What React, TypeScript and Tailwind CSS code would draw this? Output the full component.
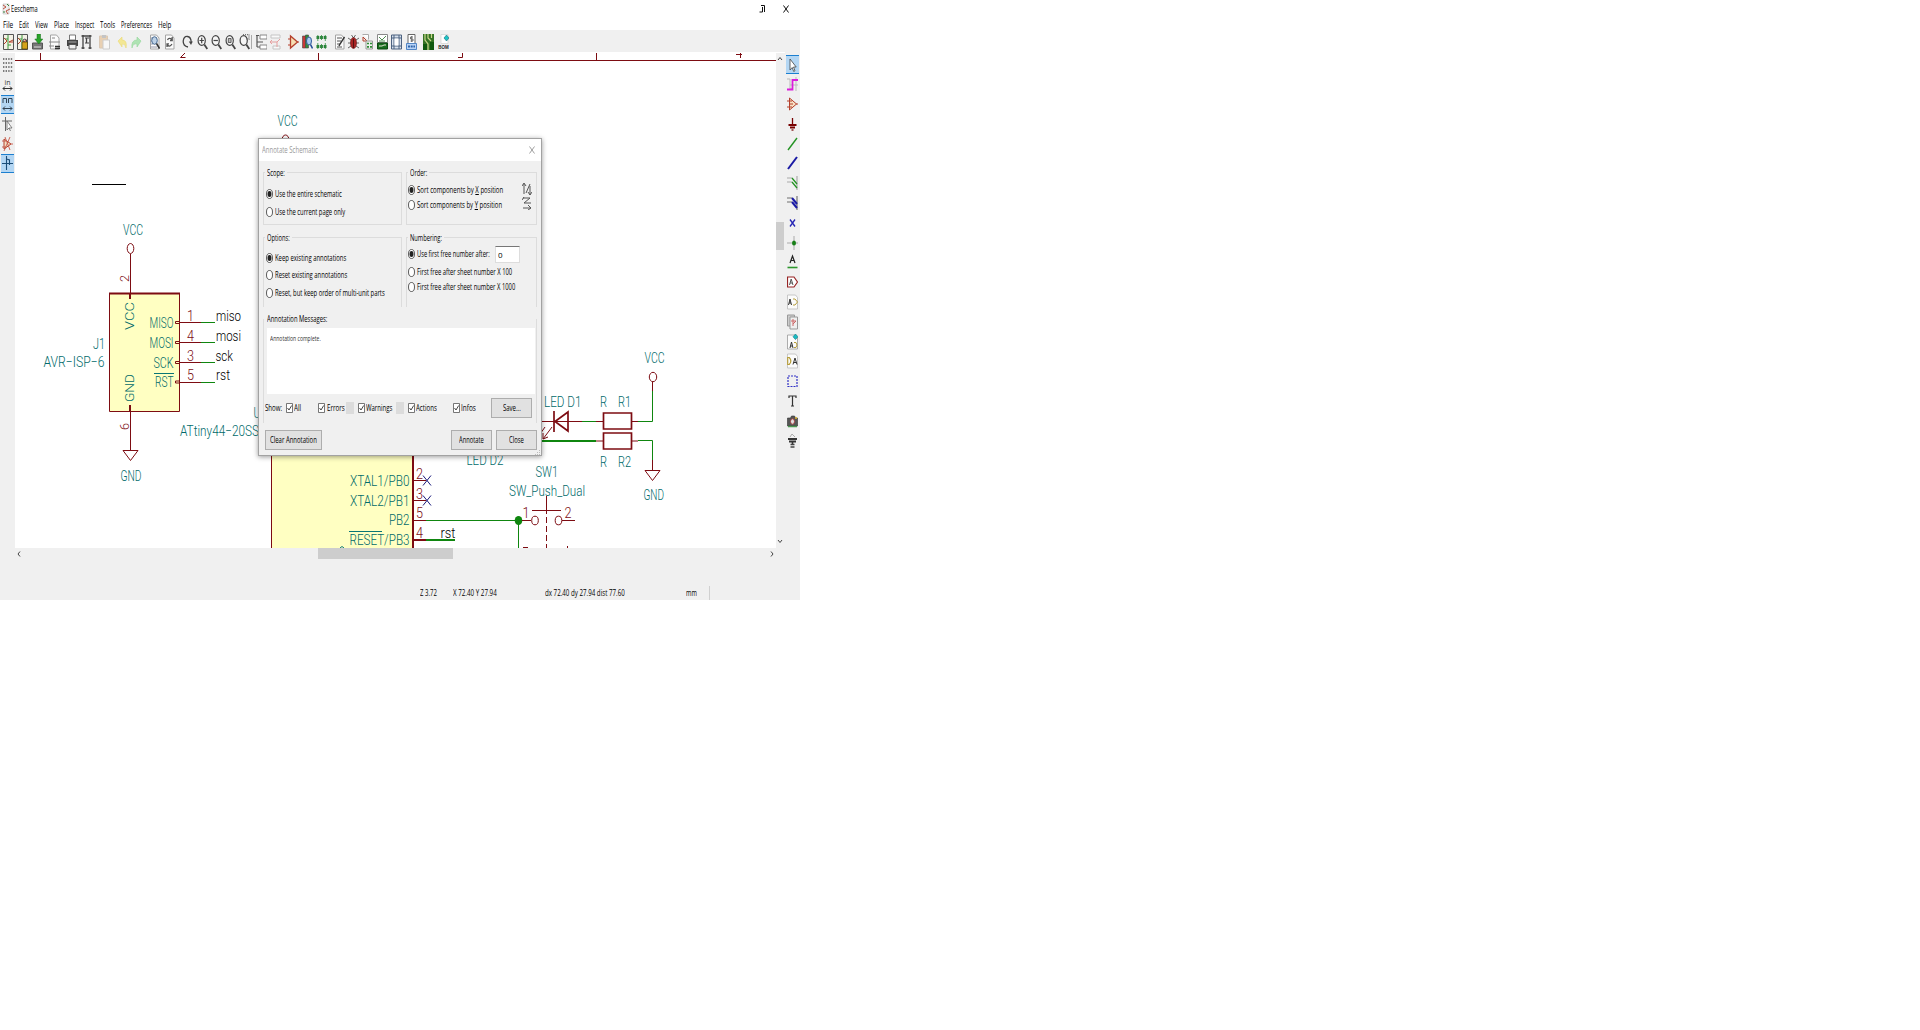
import React, { useLayoutEffect, useRef, useState } from "react";

/** A single line of UI text squeezed or stretched to a given width. */
function Fit({ w, children, className = "" }: { w: number; children: React.ReactNode; className?: string }) {
  const ref = useRef<HTMLSpanElement>(null);
  const [k, setK] = useState(1);
  useLayoutEffect(() => {
    if (ref.current) setK(w / ref.current.offsetWidth);
  }, [w]);
  return (
    <span className={`inline-block shrink-0 whitespace-nowrap ${className}`} style={{ width: w }}>
      <span ref={ref} className="inline-block origin-left" style={{ transform: `scaleX(${k})` }}>
        {children}
      </span>
    </span>
  );
}

function Icon({ children, className = "" }: { children: React.ReactNode; className?: string }) {
  return (
    <svg viewBox="0 0 11 16" className={`h-4 w-[11px] shrink-0 ${className}`} fill="none" strokeWidth="1">
      {children}
    </svg>
  );
}

const G = "#444";
const R = "#b5402c";
const page = <path d="M1.5 1h6l2.500 3v11h-8.500z" fill="#fbfbfb" stroke="#a5a5a5" />;
const lens = (
  <>
    <ellipse cx="4.700" cy="6.500" rx="3.600" ry="4.800" stroke={G} strokeWidth="1.200" fill="#f6f6f6" />
    <path d="M7.300 10.500l3 4.500" stroke={G} strokeWidth="1.800" />
  </>
);
const sheet = (
  <>
    <path d="M.5.5h10v15H.5z" fill="#f4f1e6" stroke="#555" />
    <path d="M5 1v14M5 5H2M5 11h3" stroke="#3c9a3c" />
    <path d="M1 4l3 3-3 3M6 8l4-2M6 8h4" stroke={R} />
  </>
);

const topTools: [string, React.ReactNode][] = [
  ["ml-[2.500px]", sheet],
  ["ml-[3.500px]", <>{sheet}<path d="M5 8h5.500v7H5z" fill="#d3a21a" stroke="#4b3c08" strokeWidth=".7" /><path d="M6 8V6q2-2 3.500 0v2" stroke="#444" /></>],
  ["ml-[3.500px]", <><path d="M.5 9h10v6H.5z" fill="#777" stroke="#555" /><path d="M2 13h7" stroke="#ddd" /><path d="M5 0h3.500v5h2.300L6.800 10 2.800 5H5z" fill="#29a329" stroke="#17701b" strokeWidth=".5" /></>],
  ["ml-[6.500px]", <>{page}<path d="M3 4h3M0 8h11M0 12h5" stroke="#888" /><path d="M6 12.500h5M6 14.500h5" stroke="#333" strokeWidth="1.300" /></>],
  ["ml-[6.500px]", <><path d="M2.500 1h6v5h-6z" fill="#fff" stroke="#777" /><path d="M0 6h11v6H0z" fill="#444" /><path d="M2 10.500h7V15H2z" fill="#eee" stroke="#555" /><path d="M1.500 8h8" stroke="#aaa" /></>],
  ["ml-[3.500px]", <><path d="M.5 2h10M2 1v14M9 1v14M.5 14h3M7.500 14h3M5.500 4v5" stroke={G} strokeWidth="1.300" /><path d="M4 4h4M4 9h4" stroke={G} /></>],
  ["ml-[7px]", <g opacity=".5"><path d="M.5 2h8v12h-8z" fill="#e4b275" stroke="#c5a179" /><path d="M3 1h4v3H3z" fill="#999" /><path d="M4 6h6.500v9H4z" fill="#fff" stroke="#aaa" /></g>],
  ["ml-[6px]", <path d="M2 7l4-4v3q5.500 0 4 8-1-5-4-4v3z" fill="#f3e794" stroke="#ebda74" strokeWidth=".6" />],
  ["ml-[4px]", <path d="M10 7L6 3v3q-6 0-5 8 1-5 5-4v3z" fill="#afe3b4" stroke="#94d79b" strokeWidth=".6" />],
  ["ml-[7px]", <>{page}<path d="M2 4h6M2 7h2M2 10h2M2 13h6" stroke="#99a" /><ellipse cx="5.500" cy="6.500" rx="2.800" ry="3.800" stroke="#456891" fill="#bcd0e5" /><path d="M7.500 9.500l3 5" stroke="#333" strokeWidth="1.600" /></>],
  ["ml-[4px]", <>{page}<path d="M8 5.500Q5 3 3.500 6M3 10.500q2.500 3.500 5-.5M8.200 3v3.500H6M3 13V9.800h2" stroke="#555" strokeWidth="1.300" /></>],
  ["ml-[7px]", <><path d="M6 13Q1 12 1.200 7 2 2 5.500 2.500 9 3 9.200 8" stroke={G} strokeWidth="1.300" /><path d="M6.800 7.500h4L9 11z" fill={G} /></>],
  ["ml-[4px]", <>{lens}<path d="M2.500 6.500h4.400M4.700 3.800v5.500" stroke={G} strokeWidth="1.200" /></>],
  ["ml-[3px]", <>{lens}<path d="M2.500 6.500h4.400" stroke={G} strokeWidth="1.200" /></>],
  ["ml-[3px]", <>{lens}<path d="M3.300 4.500h2.800v4H3.300z" fill="#bbb" stroke={G} strokeWidth=".8" /></>],
  ["ml-[3px]", <>{lens}<path d="M4 .5h6v4.500H7" stroke="#777" strokeDasharray="1 1" strokeWidth="1.500" /></>],
  ["ml-px border-l border-[#aaa]", null],
  ["ml-[3.500px]", <><path d="M4 1h7v4H4zM4 11h7v4H4z" stroke="#888" fill="#fff" /><path d="M0 1.500h3M1 2v11M1 8h6M1 13h3" stroke="#555" strokeWidth="1.200" /></>],
  ["ml-[3px]", <g opacity=".6"><path d="M1 1h9v3H1zM3 12h7v3H3z" stroke="#aaa" fill="#fff" /><path d="M0 8h7v5M7 8l3-3M2 6L0 8l2 2" stroke="#df6b68" /></g>],
  ["ml-[7px]", <><path d="M2.500 2v12L9.500 8z" fill="#f7dfb3" stroke={R} strokeWidth="1.300" /><path d="M0 5h2M0 11h2M9 8h2" stroke={R} /></>],
  ["ml-[3px]", <><path d="M.5 2h3v12h-3z" fill="#c93838" stroke="#444" strokeWidth=".6" /><path d="M3.500 1h3v13h-3z" fill="#348b3b" stroke="#444" strokeWidth=".6" /><ellipse cx="7" cy="7" rx="2.500" ry="4" fill="#accef0" stroke="#345c9c" /><path d="M8.500 10.500l2 4" stroke="#214c98" strokeWidth="1.600" /></>],
  ["ml-[3.500px]", <><path d="M.5 3.500h10M.5 12.500h10" stroke="#287f38" strokeWidth="3.200" strokeDasharray="2.800 .8" /><path d="M1.800 1v6M5.500 1v5M9.300 1v6M1.800 9v6M5.500 10v5M9.300 9v6" stroke="#2f8e3d" strokeWidth=".8" /></>],
  ["ml-[6.500px]", <>{page}<path d="M3 4h5M3 7h4M3 10h3M3 13h5" stroke="#555" /><path d="M10.500 3L6 10l-1 2" stroke="#333" strokeWidth="1.400" /></>],
  ["ml-[3.500px]", <><path d="M0 4l3 2M11 4L8 6M0 9h11M0 14l3-2M11 14l-3-2M3.500 1l2 3 2-3" stroke="#444" strokeWidth=".8" /><ellipse cx="5.500" cy="9" rx="3" ry="5.500" fill="#a92424" stroke="#611" strokeWidth=".6" /><path d="M5.500 5v9" stroke="#511" /></>],
  ["ml-[3px]", <><path d="M.5.500h6v5" stroke="#aaa" fill="#fff" /><path d="M1 3l5 5M1 3v4h3" stroke={R} /><path d="M4 7h6.500v8H4z" fill="#eef5ee" stroke="#999" /><path d="M5 9.500h5M5 12.800h5" stroke="#308c36" strokeWidth="1.700" strokeDasharray="2 1" /></>],
  ["ml-[3.500px]", <><path d="M.5.500h10v8H.500z" fill="#fff" stroke="#888" /><path d="M2 3l3 3 4-4M2 7h6" stroke="#4d8c50" /><path d="M.500 9h10v6H.500z" fill="#166d1d" stroke="#0b4911" /><path d="M2 12h3l2-1h2" stroke="#e4e4d4" /></>],
  ["ml-[3.500px]", <><path d="M.500 1h10v14H.500z" fill="#d8e2ee" stroke="#4d6280" /><path d="M3 1v14M8 1v14M1 4h9M1 12h9" stroke="#4d6280" /><path d="M3.500 4.500h4v7h-4z" fill="#fff" /></>],
  ["ml-[3.500px]", <><path d="M2 .500h7v9H2z" fill="#fff" stroke="#666" /><path d="M7 3H4.500v2H7v2H4.500M5.700 2v6" stroke="#555" strokeWidth=".8" /><path d="M.500 9.500h10v6H.500z" fill="#b8d3f5" stroke="#5286c5" /><path d="M2 12.500h7" stroke="#2e64aa" strokeDasharray="2 .7" strokeWidth="2" /></>],
  ["ml-[6.500px]", <><path d="M0 0h11v16H0z" fill="#347324" /><path d="M2 0v6l3 4v6M5 0v4l3 3M8.500 0v4" stroke="#c9d68a" strokeWidth="1.200" /><path d="M0 10h4v6H0zM7 8h4v8H7z" fill="#10590f" /></>],
  ["ml-[3.500px]", <><path d="M3 .500h7v9H3z" fill="#fff" stroke="#ccc" strokeWidth=".6" /><path d="M8.500 1L11 4 8.500 7 6 4z" fill="#1ec5c5" stroke="#176e80" strokeWidth=".6" /><text x=".300" y="14.500" fill="#222" stroke="none" fontSize="5.500" fontFamily="Liberation Sans" fontWeight="bold" textLength="10.400" lengthAdjust="spacingAndGlyphs">BOM</text></>],
];

const leftTools: React.ReactNode[] = [
  <path d="M1 2h10M1 6h10M1 10h10M1 14h10" stroke="#555" strokeWidth="1.400" strokeDasharray="1.400 1.200" />,
  <><text x="2.500" y="8.500" fill="#333" fontSize="7.500" fontFamily="Open Sans" textLength="6" lengthAdjust="spacingAndGlyphs">in</text><path d="M1 12.500h9M3 10.500l-2 2 2 2M8 10.500l2 2-2 2" stroke="#333" /></>,
  <><path d="M1 7V2.500h3.500V7M6.500 7V2.500H10V7M1 12.500h9M3 10.500l-2 2 2 2M8 10.500l2 2-2 2" stroke="#345" /></>,
  <><path d="M3.500 1v14M0 5h10" stroke="#666" /><path d="M5 5v9l2-2 1.500 3M5 5l5 7H7" stroke="#666" strokeWidth=".8" fill="#fff" /></>,
  <><path d="M2 3l7 5-7 5z" fill="#f3ddc2" stroke={R} /><path d="M0 5h4M0 11h4M8 8h3M8 1L2 15M3 1l5 13" stroke="#c45a49" strokeWidth=".9" /></>,
  <path d="M4.500 1v14M0 8.500h11M4.500 4l3 1v5" stroke="#1b4d77" strokeWidth="1.100" />,
];

const rightTools: React.ReactNode[] = [
  <path d="M3 2v11l2.200-2.500 1.500 4 1.300-.8-1.500-3.700h2.700z" fill="#fff" stroke="#444" strokeWidth=".8" />,
  <><path d="M0 3h3v10h2M9 1v14M3 9h8" stroke="#bbb" /><path d="M0 13.500h5.500V4H11" stroke="#db1cdb" strokeWidth="1.800" /></>,
  <><path d="M2.500 2v12L9.500 8z" fill="#f7dfc3" stroke={R} /><path d="M0 5h5M0 11h5M3 8h3M9 8h2" stroke={R} /></>,
  <><path d="M5.500 2v7" stroke="#700" strokeWidth="1.300" /><path d="M1.500 9h8M3 11.500h5" stroke="#700" strokeWidth="1.800" /><path d="M4.500 14h2" stroke="#700" strokeWidth="1.300" /></>,
  <path d="M1 14l9-12" stroke="#239323" strokeWidth="1.400" />,
  <path d="M1 14l9-12" stroke="#1a1aa4" strokeWidth="2" />,
  <><path d="M10 1v14M0 3h5M0 7h5" stroke="#aaa" strokeWidth="1.200" /><path d="M5 3l5 6M5 7l5 6" stroke="#239323" strokeWidth="1.300" /></>,
  <><path d="M10 1v14M0 3h5M0 7h5" stroke="#999" strokeWidth="1.700" /><path d="M5 3l5 6M5 7l5 6" stroke="#1a1aa4" strokeWidth="2" /></>,
  <path d="M3 4.500l5 7M8 4.500l-5 7" stroke="#2424b4" strokeWidth="1.300" />,
  <><path d="M7 1v14M0 8h11" stroke="#aaa" /><ellipse cx="7" cy="8" rx="2" ry="2.500" fill="#178017" /></>,
  <><path d="M3 9L5.500 2 8 9M4 6.500h3" stroke="#222" strokeWidth="1.200" /><path d="M.500 13.500h10" stroke="#2c962c" strokeWidth="1.600" /></>,
  <><path d="M.500 3H7l3.500 5L7 13H.500z" stroke="#972323" strokeWidth="1.200" fill="#fff" /><path d="M2.500 11L4.200 5 6 11M3 9h2.500" stroke="#555" /></>,
  <><path d="M.5 1h8l2 2.500V15H.5z" fill="#fbfbfb" stroke="#bbb" strokeWidth=".8" /><path d="M1.500 11l1.500-6 1.500 6M2 9h2" stroke="#333" /><path d="M6 5h2l2.500 3L8 11H6" stroke="#b79e3a" /></>,
  <><path d="M.500 1h7v11h-7z" fill="#ccc" stroke="#999" /><path d="M3 3h7.500v12H3z" fill="#eee" stroke="#999" /><path d="M4 7h5L6 10M6 5v7" stroke="#c66" /></>,
  <><path d="M.5 1h8l2 2.500V15H.5z" fill="#fbfbfb" stroke="#999" strokeWidth=".8" /><path d="M8.500 0L11 2.800 8.500 5.600 6 2.800z" fill="#18bcc0" stroke="#178" strokeWidth=".6" /><path d="M3 14l1.500-6L6 14M3.500 12h2" stroke="#333" /><path d="M7 8.500h2l1 2.500-1 2.500H7" stroke="#b79e3a" /></>,
  <><path d="M.5 1h8l2 2.500V15H.5z" fill="#fbfbfb" stroke="#bbb" strokeWidth=".8" /><path d="M.7 4.500v7h1.500Q5.500 8 2.200 4.500z" stroke="#b79e3a" strokeWidth="1.200" /><path d="M6 11.500L8 5l2 6.500M6.700 9.500h2.600" stroke="#333" /></>,
  <path d="M1 3h9v10.500H1z" stroke="#3131c5" strokeWidth="1.200" strokeDasharray="2 1" />,
  <path d="M2 5V3h7v2M5.500 3v10M4 13h3" stroke="#333" strokeWidth="1.200" />,
  <><path d="M.500 5h3l1-2h3l1 2h2v8h-10z" fill="#555" stroke="#333" strokeWidth=".6" /><ellipse cx="5.500" cy="8.500" rx="2" ry="2.700" fill="#ddd" stroke="#a33" strokeWidth=".8" /><path d="M8 5h2" stroke="#dcb42b" strokeWidth="1.500" /><path d="M1 13.500h9" stroke="#49964f" strokeWidth="1.500" /></>,
  <><path d="M1 6h9M2 8.500h7" stroke="#333" strokeWidth="1.800" /><path d="M3 4l2-3 3 3" stroke="#aaa" /><path d="M5.500 8v3" stroke="#333" strokeWidth="1.600" /><path d="M3.500 11.500h4M3.500 14h4" stroke="#444" strokeWidth="1.500" /></>,
];

type TProps = { x: number; y: number; w: number; t: string; f?: string; s?: number };
/** Schematic text: x is the left edge, y the baseline. */
const T = ({ x, y, w, t, f = "#006a6a", s = 15 }: TProps) => (
  <text x={x} y={y} fill={f} fontSize={s} textLength={w} lengthAdjust="spacingAndGlyphs">{t}</text>
);

const RED = "#7d0c12";
const GREEN = "#0f860f";

function Schematic() {
  return (
    <svg viewBox="15 53 761 495" className="block h-[495px] w-[761px] shrink-0 bg-white" fill="none" fontFamily="Roboto, 'Open Sans', sans-serif" fontWeight="300">
      <g stroke={RED}>
        <path d="M15 60.500H776M40.500 53v7M318.500 53v7M596.500 53v7" />
        <path d="M185 53l-4.500 4.500h5M462.500 53v4.500h-4.500M736 54.500h6M740.500 53v5" />
      </g>
      <path d="M92 184.500h34" stroke="#000" />

      <T x={123} y={235} w={20} t="VCC" />
      <ellipse cx="130.500" cy="248.500" rx="3.300" ry="5" stroke={RED} />
      <path d="M130.500 254v39" stroke={RED} />
      <path d="M109.500 293.500h70v118h-70z" fill="#ffffc2" stroke={RED} />
      <path d="M109 293.500h71M130 293v6M130 405v7" stroke={RED} strokeWidth="2" />
      <g transform="translate(129 282) rotate(-90)"><T x={0} y={0} w={7} t="2" f={RED} s={12} /></g>
      <g transform="translate(129 430) rotate(-90)"><T x={0} y={0} w={7} t="6" f={RED} s={12} /></g>
      <g transform="translate(134 330) rotate(-90)"><T x={0} y={0} w={28} t="VCC" s={12} /></g>
      <g transform="translate(134 402) rotate(-90)"><T x={0} y={0} w={28} t="GND" s={12} /></g>
      <T x={149.500} y={328} w={24} t="MISO" />
      <T x={149.500} y={348} w={24} t="MOSI" />
      <T x={153.500} y={368} w={20} t="SCK" />
      <T x={155} y={387} w={18.500} t="RST" />
      <path d="M154 373.500h20" stroke="#087575" />
      <path d="M180 322.500h21M180 342.500h21M180 362.500h21M180 382.500h21" stroke={RED} />
      <path d="M175.500 321.500h4v2h-4zM175.500 341.500h4v2h-4zM175.500 361.500h4v2h-4zM175.500 381h4v2h-4z" stroke={RED} />
      <path d="M201 322.500h14M201 342.500h14M201 362.500h14M201 382.500h14" stroke={GREEN} />
      <T x={187} y={321} w={7} t="1" f={RED} />
      <T x={187} y={340.500} w={7} t="4" f={RED} />
      <T x={187} y={360.500} w={7} t="3" f={RED} />
      <T x={187} y={380} w={7} t="5" f={RED} />
      <T x={216} y={321} w={25} t="miso" f="#000" />
      <T x={216} y={341} w={25} t="mosi" f="#000" />
      <T x={215.500} y={361} w={17.500} t="sck" f="#000" />
      <T x={216} y={380} w={14} t="rst" f="#000" />
      <T x={93} y={349} w={12} t="J1" />
      <T x={43.500} y={366.500} w={61} t="AVR−ISP−6" />
      <path d="M130.500 411v39M123 450.500h15l-7.500 10z" stroke={RED} />
      <T x={120.500} y={481} w={21} t="GND" />
      <T x={253.500} y={418} w={7} t="U" />
      <T x={180} y={435.500} w={79} t="ATtiny44−20SS" />

      <T x={277.500} y={126} w={20} t="VCC" />
      <ellipse cx="285.500" cy="140" rx="3.500" ry="5" stroke={RED} />

      <path d="M271.500 440H413v120H271.500z" fill="#ffffc2" stroke={RED} />
      <path d="M413 440v110" stroke={RED} strokeWidth="2" />
      <T x={350} y={486} w={59.500} t="XTAL1/PB0" />
      <T x={350} y={505.500} w={59.500} t="XTAL2/PB1" />
      <T x={389} y={525} w={20.500} t="PB2" />
      <T x={349.500} y={545} w={60} t="RESET/PB3" />
      <path d="M349 531.500h33M340 548q2-3 4 0" stroke="#087575" />
      <path d="M414 480.500h12M414 500.500h12M414 520.500h12" stroke={RED} />
      <path d="M414 540h12" stroke={RED} strokeWidth="2" />
      <T x={416} y={478.500} w={7} t="2" f={RED} s={14} />
      <T x={416} y={498.500} w={7} t="3" f={RED} s={14} />
      <T x={416} y={518} w={7} t="5" f={RED} s={14} />
      <T x={416} y={538} w={7} t="4" f={RED} s={14} />
      <path d="M423 475.500l8 10M431 475.500l-8 10M423 495.500l8 10M431 495.500l-8 10" stroke="#1a1a7c" />
      <path d="M426 520.500h92M518.500 520v30" stroke={GREEN} />
      <path d="M426 540h29" stroke={GREEN} strokeWidth="2" />
      <T x={440.500} y={537.500} w={15} t="rst" f="#000" />
      <ellipse cx="518.500" cy="520.500" rx="3.800" ry="4.500" fill={GREEN} />

      <T x={466.500} y={465} w={37} t="LED D2" />
      <T x={544} y={407} w={37.500} t="LED D1" />
      <T x={600} y={407} w={7} t="R" />
      <T x={618} y={407} w={13} t="R1" />
      <T x={600} y={467} w={7} t="R" />
      <T x={618} y={467} w={13} t="R2" />
      <path d="M540 421.500h42M596 421.500h7M632 421.500h6M596 441h7M632 441h6" stroke={RED} />
      <path d="M582 421.500h14M638 421.500h14.500V391M638 440.500h14.500V460" stroke={GREEN} />
      <path d="M540 441h56" stroke={GREEN} strokeWidth="2" />
      <path d="M603.500 413h28v16h-28zM603.500 433h28v16h-28zM554 411v21M568 412v19l-13-9.500z" stroke={RED} strokeWidth="1.700" />
      <path d="M545 427l-7 10M552 427l-9 12M543 433v6l5-2M652.500 391v-9M652.500 460v10M645 470.500h15l-7.500 10z" stroke={RED} />
      <ellipse cx="653" cy="377" rx="3.700" ry="4.700" stroke={RED} />
      <T x={644.500} y={363} w={20} t="VCC" />
      <T x={643.500} y={500} w={20.500} t="GND" />
      <T x={535.500} y={476.500} w={22.500} t="SW1" />
      <T x={509} y={496} w={76} t="SW_Push_Dual" />
      <path d="M522 520.500h9M532 510.500h29M546.500 496v18M562 520.500h13M523 547.500h5M567.500 546v3" stroke={RED} />
      <path d="M546.500 517v33" stroke={RED} strokeDasharray="6 3" />
      <ellipse cx="535" cy="520.500" rx="3.300" ry="4.300" stroke={RED} />
      <ellipse cx="558.500" cy="520.500" rx="3.300" ry="4.300" stroke={RED} />
      <T x={522.500} y={517.500} w={7} t="1" f={RED} s={14} />
      <T x={564.500} y={517.500} w={7} t="2" f={RED} s={14} />
    </svg>
  );
}

function Radio({ on, w, h, children }: { on?: boolean; w: number; h: string; children: React.ReactNode }) {
  return (
    <div className={`flex shrink-0 items-center gap-[2px] ${h}`}>
      <svg viewBox="0 0 7 10" className="h-[10px] w-[7px] shrink-0">
        <ellipse cx="3.500" cy="5" rx="3" ry="4.500" fill="#fff" stroke="#333" strokeWidth=".8" />
        {on && <ellipse cx="3.500" cy="5" rx="2" ry="3" fill="#222" />}
      </svg>
      <Fit w={w}>{children}</Fit>
    </div>
  );
}

function Check({ w, gap, children }: { w: number; gap: string; children: React.ReactNode }) {
  return (
    <div className={`flex shrink-0 items-center ${gap}`}>
      <svg viewBox="0 0 7 10" className="h-[10px] w-[7px] shrink-0" fill="none">
        <path d="M.500.500h6v9h-6z" fill="#fff" stroke="#555" strokeWidth=".8" />
        <path d="M1.500 5l1.500 2L5.700 2.500" stroke="#333" strokeWidth=".9" />
      </svg>
      <Fit w={w}>{children}</Fit>
    </div>
  );
}

function Group({ title, w, className, children }: { title: string; w: number; className: string; children: React.ReactNode }) {
  return (
    <div className={`border-[#dcdcdc] ${className}`}>
      <div className="-mt-[6px] flex h-3 items-center pl-[1px]">
        <span className="flex bg-[#f0f0f0] px-[2px]">
          <Fit w={w}>{title}</Fit>
        </span>
      </div>
      {children}
    </div>
  );
}

function Button({ w, className, children }: { w: number; className: string; children: React.ReactNode }) {
  return (
    <button className={`flex h-5 shrink-0 items-center justify-center border border-[#adadad] bg-[#e1e1e1] leading-3 ${className}`}>
      <Fit w={w}>{children}</Fit>
    </button>
  );
}

function AnnotateDialog() {
  return (
    <div className="absolute left-[258px] top-[138px] flex h-[318px] w-[284px] flex-col border border-[#a2a2a2] bg-[#f0f0f0] leading-3 shadow-[0_1px_5px_rgba(0,0,0,0.4)]">
      <div className="flex h-[22px] shrink-0 items-center justify-between bg-white pl-[3px] pr-[6px] text-[#999]">
        <Fit w={56}>Annotate Schematic</Fit>
        <svg viewBox="0 0 6 8" className="h-2 w-[6px]"><path d="M.500.500l5 7M5.500.500l-5 7" stroke="#888" strokeWidth=".8" /></svg>
      </div>
      <div className="flex flex-1 flex-col pl-[4px] pt-[11px]">
        <div className="flex h-[65px] gap-[4px]">
          <Group title="Scope:" w={18} className="h-[53px] w-[139px] border">
            <div className="flex flex-col pl-[2px] pt-[6px]">
              <Radio on w={67} h="h-[18px]">Use the entire schematic</Radio>
              <Radio w={70} h="h-[17px]">Use the current page only</Radio>
            </div>
          </Group>
          <Group title="Order:" w={17} className="h-[53px] w-[131px] border">
            <div className="flex pl-[1px] pt-[3px]">
              <div className="flex flex-col">
                <Radio on w={86} h="h-[15px]">Sort components by <u>X</u> position</Radio>
                <Radio w={85} h="h-[16px]">Sort components by <u>Y</u> position</Radio>
              </div>
              <svg viewBox="0 0 10 28" className="ml-[19px] h-7 w-[10px]" fill="none" stroke="#555">
                <path d="M2 12V2M0 4l2-3 2 3M4 11l4-9M8 4v9M6 10l2 3 2-3M1 16h7L2 21h7M0 18l2-3M1 26h8M6 23l3 3-3 2" />
              </svg>
            </div>
          </Group>
        </div>
        <div className="flex h-[82px] gap-[4px]">
          <Group title="Options:" w={23} className="h-[70px] w-[139px] border border-b-0">
            <div className="flex flex-col pl-[2px] pt-[5px]">
              <Radio on w={71} h="h-[17px]">Keep existing annotations</Radio>
              <Radio w={72} h="h-[18px]">Reset existing annotations</Radio>
              <Radio w={110} h="h-[17px]">Reset, but keep order of multi-unit parts</Radio>
            </div>
          </Group>
          <Group title="Numbering:" w={32} className="h-[70px] w-[131px] border border-b-0">
            <div className="flex flex-col pl-[1px] pt-px">
              <div className="flex h-[18px]">
                <Radio on w={73} h="h-[17px]">Use first free number after:</Radio>
                <input readOnly value="0" className="ml-[5px] mt-px h-[17px] w-[25px] border border-[#ddd] border-t-[#777] bg-white px-[2px] text-[8px] leading-3" />
              </div>
              <Radio w={95} h="h-[17px]">First free after sheet number X 100</Radio>
              <Radio w={98} h="h-[14px]">First free after sheet number X 1000</Radio>
            </div>
          </Group>
        </div>
        <Group title="Annotation Messages:" w={60} className="h-[104px] w-[274px] border-x">
          <div className="ml-[3px] mt-[3px] h-[66px] w-[268px] bg-white pl-[3px] pt-[4px] text-[8px] text-[#333]">
            <Fit w={51}>Annotation complete.</Fit>
          </div>
          <div className="mt-[4px] flex h-5 items-center pl-[1px]">
            <Fit w={17}>Show:</Fit>
            <Check w={7} gap="ml-[4px] gap-[1px]">All</Check>
            <Check w={18} gap="ml-[17px] gap-[2px]">Errors</Check>
            <span className="ml-[1px] h-3 w-2 bg-[#dcdcdc]" />
            <Check w={26} gap="ml-[4px] gap-[1px]">Warnings</Check>
            <span className="ml-[4px] h-3 w-2 bg-[#dcdcdc]" />
            <Check w={21} gap="ml-[4px] gap-[1px]">Actions</Check>
            <Check w={15} gap="ml-[16px] gap-[1px]">Infos</Check>
            <Button w={18} className="ml-[15px] w-[41px]">Save...</Button>
          </div>
        </Group>
        <div className="mt-[7px] flex items-start pl-[2px]">
          <Button w={47} className="w-[57px]">Clear Annotation</Button>
          <Button w={25} className="ml-[129px] w-[41px]">Annotate</Button>
          <Button w={15} className="ml-[4px] w-[41px]">Close</Button>
        </div>
        <div className="flex justify-end pr-[1px]">
          <svg viewBox="0 0 5 5" className="h-[5px] w-[5px]" stroke="#bbb"><path d="M4.500 0v1M4.500 2v1M4.500 4v1M2.500 2v1M2.500 4v1M.500 4v1" /></svg>
        </div>
      </div>
    </div>
  );
}

const menus: [string, number][] = [
  ["File", 10], ["Edit", 10], ["View", 13], ["Place", 15], ["Inspect", 19], ["Tools", 15], ["Preferences", 31], ["Help", 13],
];

const chevrons = {
  up: "M2 5l2-2.500L6 5",
  down: "M2 3l2 2.500L6 3",
  left: "M5 1.500L3 4l2 2.500",
  right: "M3 1.500L5 4 3 6.500",
};
const Chevron = ({ dir }: { dir: keyof typeof chevrons }) => (
  <svg viewBox="0 0 8 8" className="h-2 w-2 shrink-0" fill="none" stroke="#444"><path d={chevrons[dir]} /></svg>
);

export default function App() {
  return (
    <div className="h-[1030px] w-full overflow-hidden bg-white font-['Open_Sans',sans-serif] text-[9px] leading-3 text-black">
      <div className="relative flex h-[600px] w-[800px] flex-col bg-[#f0f0f0]">
        <div className="flex h-[18px] shrink-0 items-center bg-white pl-[1.500px]">
          <svg viewBox="0 0 8 12" className="h-3 w-2" fill="none">
            <path d="M1 1h6v10H1z" fill="#eee" stroke="#bbb" strokeWidth=".6" />
            <path d="M1 2l3 2-3 2M4 8l4-2M4 8l2 3" stroke={R} strokeWidth=".9" />
            <path d="M5 1l2 2M1 9h2" stroke="#37803a" />
          </svg>
          <Fit w={27} className="ml-[1.500px]">Eeschema</Fit>
          <svg viewBox="0 0 6 8" className="ml-[721px] h-2 w-[6px]" fill="none" stroke="#111"><path d="M.500 7h3V2M2 .500h3.500V7" /></svg>
          <svg viewBox="0 0 6 8" className="ml-[18px] h-2 w-[6px]" stroke="#111"><path d="M.500.500l5 7M5.500.500l-5 7" /></svg>
        </div>
        <div className="flex h-3 shrink-0 items-center gap-[6px] bg-white pl-[3px] pt-px">
          {menus.map(([m, w]) => <Fit key={m} w={w}>{m}</Fit>)}
        </div>
        <div className="flex h-[22px] shrink-0 items-center pt-[2px]">
          {topTools.map(([cls, art], i) =>
            art ? <Icon key={i} className={cls}>{art}</Icon> : <span key={i} className={`h-[14px] w-px ${cls}`} />
          )}
        </div>
        <div className="h-px w-[785px] shrink-0 bg-white" />
        <div className="flex h-[495px] shrink-0">
          <div className="flex w-[15px] shrink-0 flex-col pl-[1px] pt-[2px]">
            {leftTools.map((art, i) => (
              <div key={i} className="flex h-[19.800px] items-start">
                <div className={`flex h-[19px] w-[13px] items-center justify-center ${i === 2 || i === 5 ? "border-y border-[#1c7fd0] bg-[#b3d6f3]" : ""}`}>
                  <Icon>{art}</Icon>
                </div>
              </div>
            ))}
          </div>
          <Schematic />
          <div className="flex w-2 flex-col items-center pb-[3px] pt-[2px]">
            <Chevron dir="up" />
            <div className="mt-[159px] h-7 w-2 bg-[#cdcdcd]" />
            <div className="flex-1" />
            <Chevron dir="down" />
          </div>
          <div className="flex flex-col pl-[2px] pt-[2px]">
            {rightTools.map((art, i) => (
              <div key={i} className="flex h-[19.800px] items-start">
                <div className={`flex h-[19px] w-[13px] items-center justify-center ${i === 0 ? "border-y border-[#1c7fd0] bg-[#b3d6f3]" : ""}`}>
                  <Icon>{art}</Icon>
                </div>
              </div>
            ))}
          </div>
        </div>
        <div className="flex h-[11px] w-[776px] shrink-0 items-center pl-[15px]">
          <Chevron dir="left" />
          <div className="ml-[295px] h-[11px] w-[135px] bg-[#cdcdcd]" />
          <div className="flex-1" />
          <Chevron dir="right" />
        </div>
        <div className="mt-[26px] flex h-[15px] items-center pl-[420px] pt-px text-[8.500px]">
          <Fit w={17}>Z 3.72</Fit>
          <Fit w={44} className="ml-[16px]">X 72.40 Y 27.94</Fit>
          <Fit w={80} className="ml-[48px]">dx 72.40 dy 27.94 dist 77.60</Fit>
          <Fit w={11} className="ml-[61px]">mm</Fit>
          <span className="ml-[12px] h-[14px] w-px bg-[#d0d0d0]" />
        </div>
        <AnnotateDialog />
      </div>
    </div>
  );
}
